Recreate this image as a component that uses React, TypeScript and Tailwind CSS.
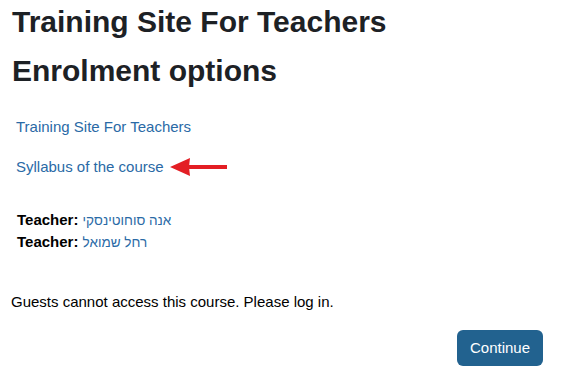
export default function App() {
  return (
    <div className="w-[567px] h-[378px] bg-white text-[#1d2125] overflow-hidden" style={{ fontFamily: '"Liberation Sans", Arial, sans-serif' }}>
      <div className="pl-[12px] pt-[4px]">
        <h1 className="text-[30px] font-bold leading-[36px]">Training Site For Teachers</h1>
        <h2 className="text-[30px] font-bold leading-[36px] mt-[13px]">Enrolment options</h2>
      </div>
      <div className="pl-[16px] mt-[28px] text-[15px] leading-[20px] text-[#2a6aa6]">
        <div>Training Site For Teachers</div>
        <div className="mt-[20px] flex items-center">
          <span>Syllabus of the course</span>
          <svg width="58" height="20" viewBox="0 0 58 20" className="ml-[6px]">
            <path d="M17 10 L57 10" stroke="#e31e24" strokeWidth="4" />
            <polygon points="0,10 20,1 19,10 20,19" fill="#e31e24" />
          </svg>
        </div>
      </div>
      <div className="pl-[17px] mt-[32px] text-[15px] leading-[22px]">
        <div className="h-[22px]"><b className="text-black">Teacher:</b> <span className="text-[#2a6aa6] text-[13.5px] leading-[10px]">אנה סוחוטינסקי</span></div>
        <div className="h-[22px]"><b className="text-black">Teacher:</b> <span className="text-[#2a6aa6] text-[13.5px] leading-[10px]">רחל שמואל</span></div>
      </div>
      <div className="pl-[11px] mt-[39px] text-[15px] leading-[20px] text-black">Guests cannot access this course. Please log in.</div>
      <div className="flex justify-end pr-[24px] mt-[18px]">
        <button className="bg-[#22628f] text-white text-[15px] rounded-[6px] h-[36px] w-[86px]">Continue</button>
      </div>
    </div>
  );
}
